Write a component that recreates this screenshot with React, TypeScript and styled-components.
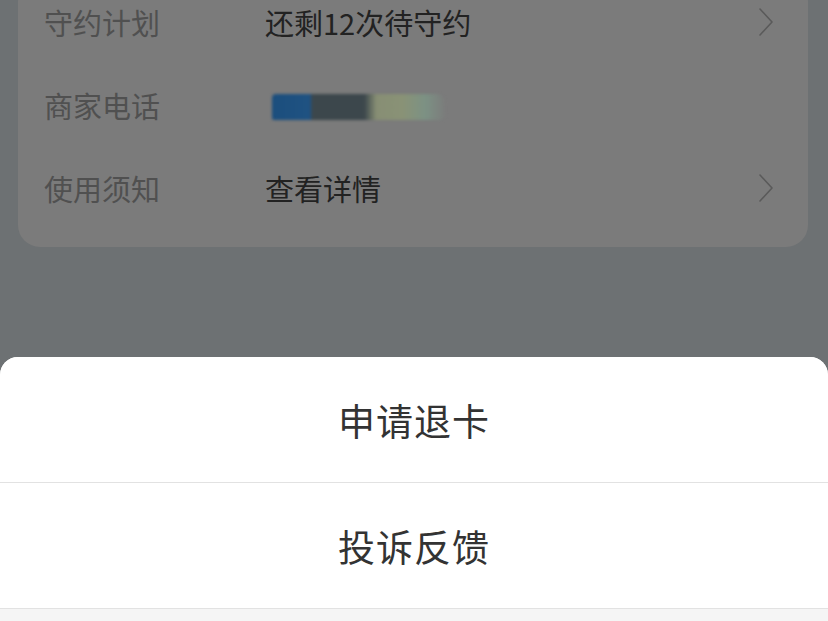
import React from "react";
import styled, { createGlobalStyle } from "styled-components";

const Global = createGlobalStyle`
  html, body {
    margin: 0;
    padding: 0;
    background: #6d7173;
  }
  * { box-sizing: border-box; }
`;

const Page = styled.div`
  position: relative;
  width: 828px;
  height: 621px;
  overflow: hidden;
  background: #6d7173;
  font-family: "Noto Sans CJK SC", "Noto Sans", sans-serif;
`;

const Card = styled.div`
  margin: -20px 20px 0 18px;
  padding: 0 32px 18px 26px;
  background: #7b7b7b;
  border-radius: 22px;
`;

const Row = styled.div`
  display: flex;
  align-items: center;
  height: 83px;
`;

const Label = styled.span`
  width: 221px;
  font-size: 29px;
  color: #505050;
  flex-shrink: 0;
`;

const Value = styled.span`
  flex: 1;
  font-size: 29px;
  color: #222222;
`;

const Blur = styled.div`
  width: 174px;
  height: 26px;
  margin-left: 7px;
  margin-top: 4px;
  border-radius: 4px 10px 6px 2px;
  background: linear-gradient(
    90deg,
    #1b4e7d 0%,
    #1f5282 22%,
    #3c474c 23%,
    #3c474c 53%,
    #878e74 60%,
    #899276 75%,
    #7c9184 88%,
    #7b7b7b 100%
  );
  filter: blur(1.5px);
`;

const Sheet = styled.div`
  position: absolute;
  left: 0;
  right: 0;
  top: 357px;
  bottom: 0;
  background: #f5f5f5;
  border-radius: 18px 18px 0 0;
  overflow: hidden;
`;

const Action = styled.div`
  display: flex;
  align-items: center;
  justify-content: center;
  height: 126px;
  background: #ffffff;
  border-bottom: 1px solid #e2e2e2;
  font-size: 37px;
  color: #333333;
  letter-spacing: 1px;
`;

const Chevron = () => (
  <svg width="20" height="32" viewBox="0 0 20 32" fill="none">
    <path d="M4 3 L16 16 L4 29" stroke="#5a5a5a" strokeWidth="1.6" strokeLinecap="round" strokeLinejoin="round" />
  </svg>
);

export default function App() {
  return (
    <>
      <Global />
      <Page>
        <Card>
          <Row>
            <Label>守约计划</Label>
            <Value>还剩12次待守约</Value>
            <Chevron />
          </Row>
          <Row>
            <Label>商家电话</Label>
            <Blur />
          </Row>
          <Row>
            <Label>使用须知</Label>
            <Value>查看详情</Value>
            <Chevron />
          </Row>
        </Card>
        <Sheet>
          <Action>申请退卡</Action>
          <Action>投诉反馈</Action>
        </Sheet>
      </Page>
    </>
  );
}
